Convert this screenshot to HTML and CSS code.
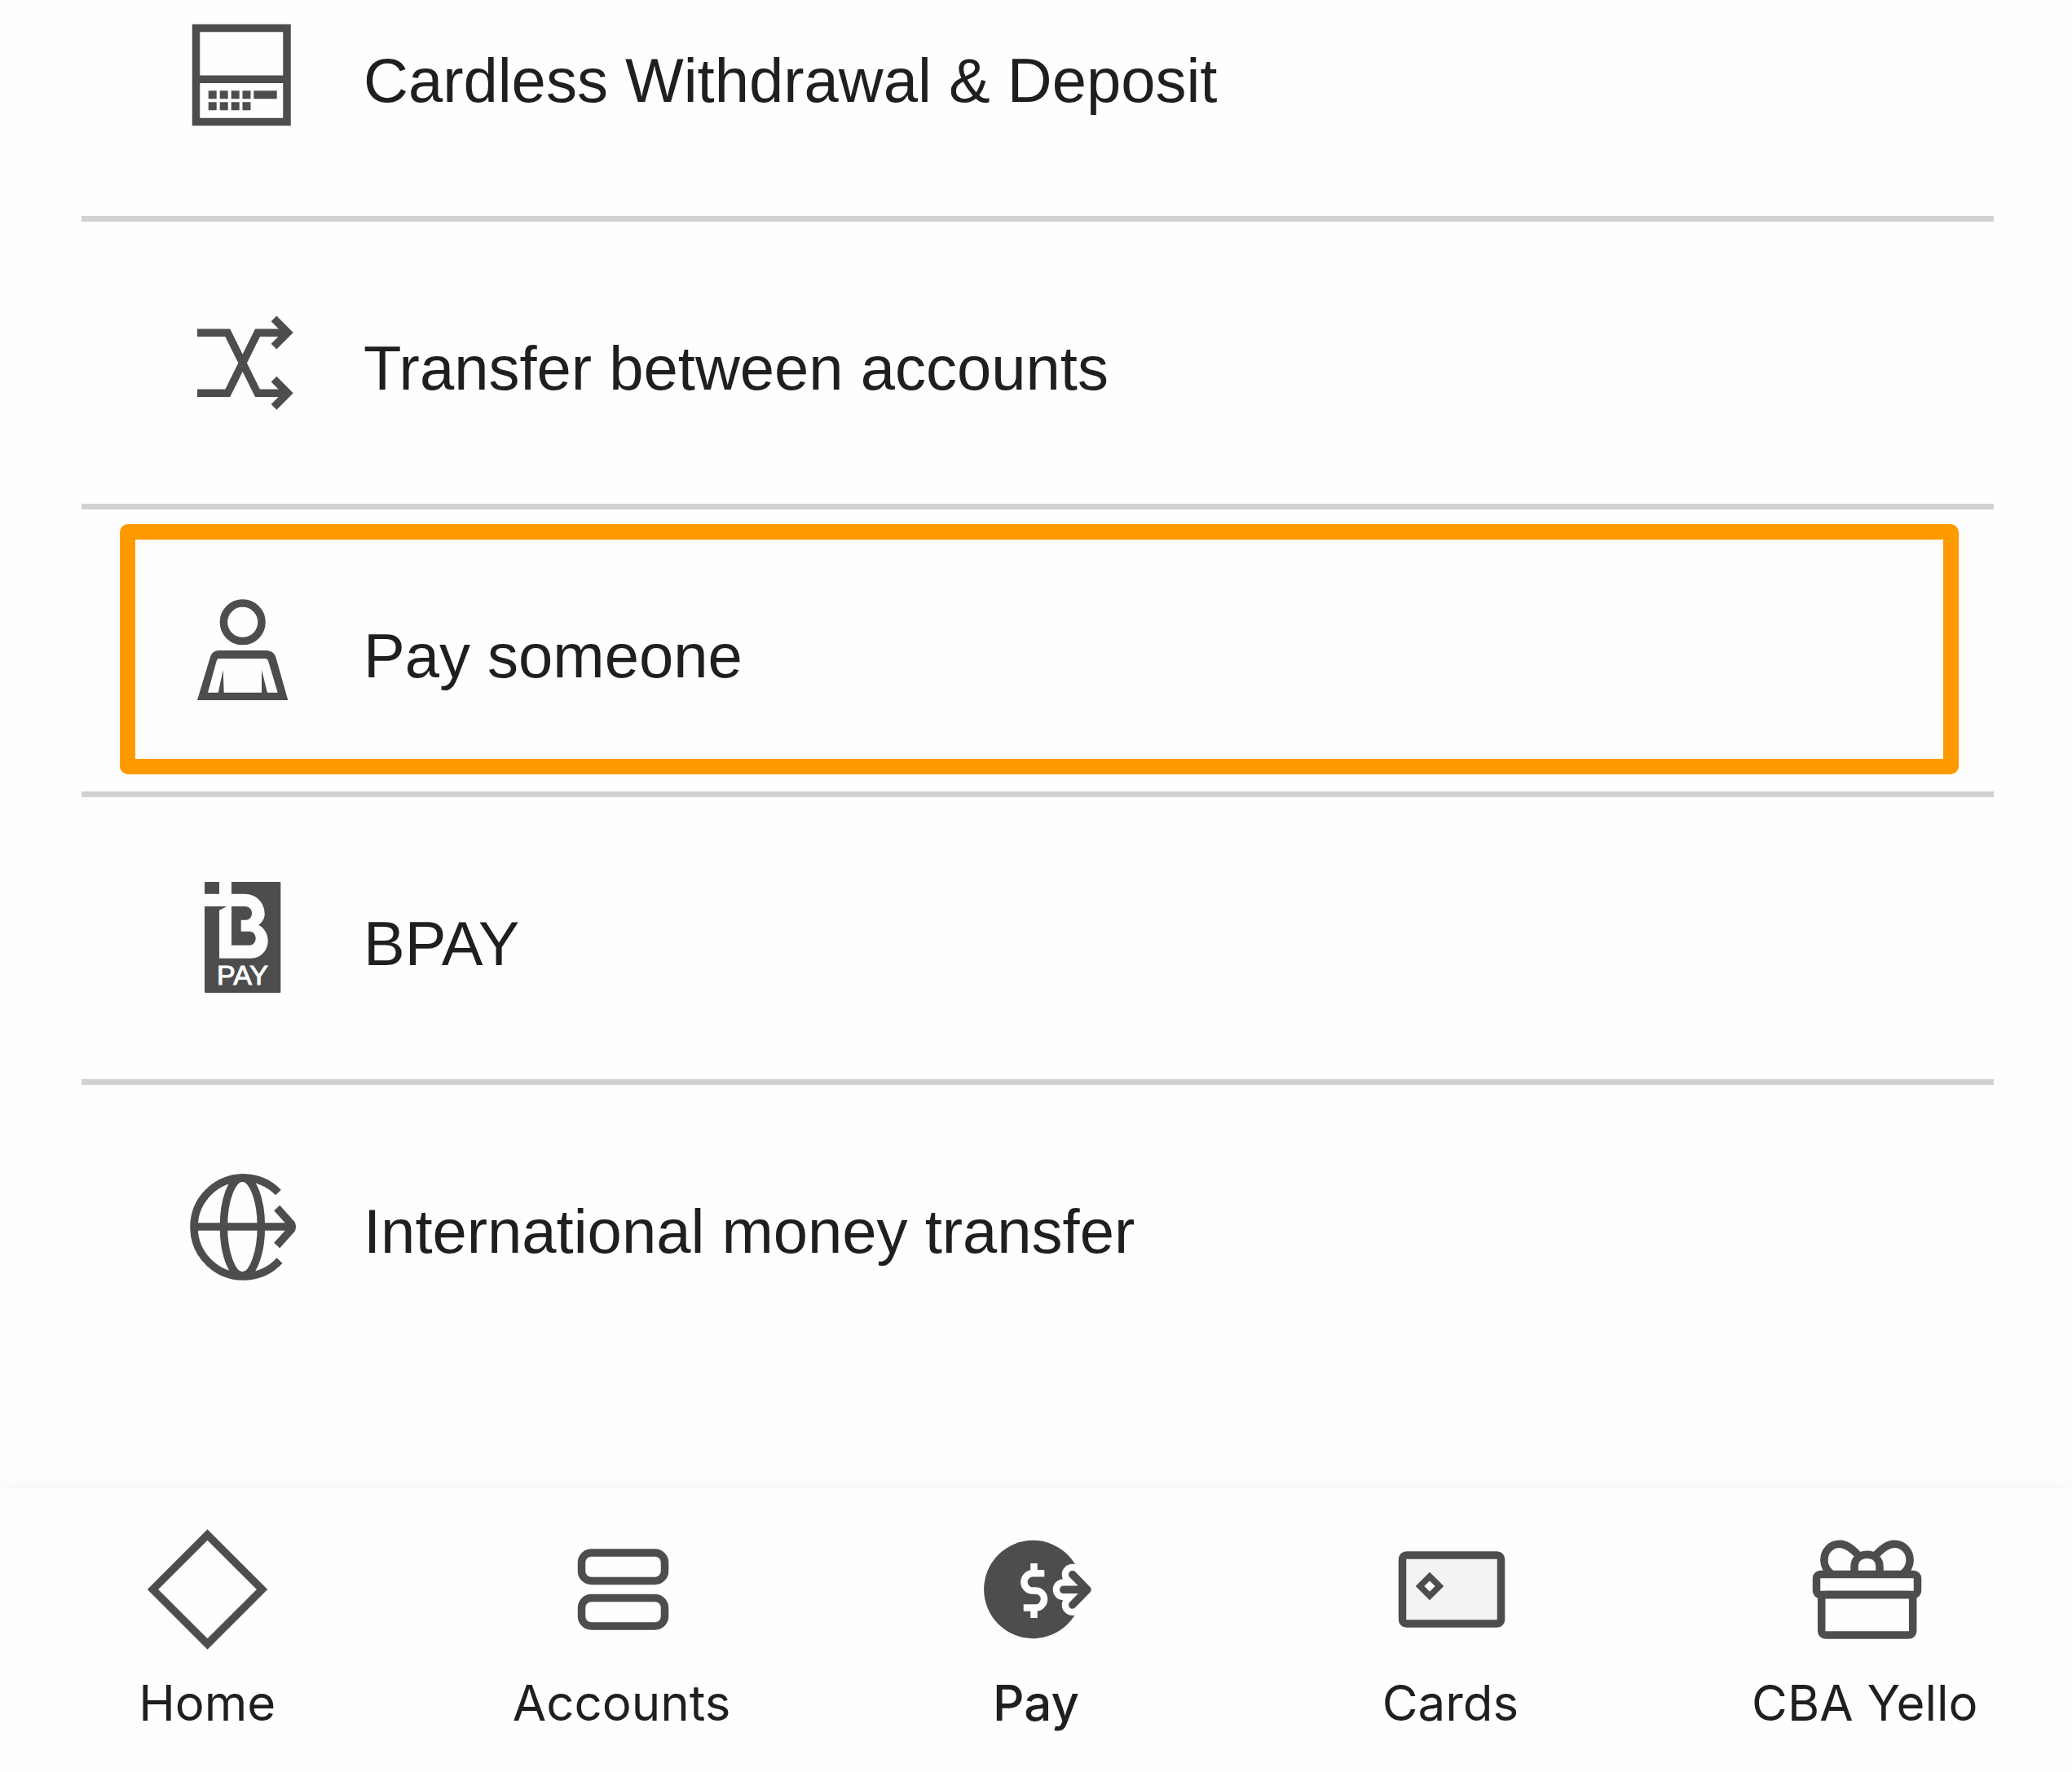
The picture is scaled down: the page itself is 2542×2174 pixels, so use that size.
FILE: index.html
```html
<!DOCTYPE html>
<html lang="en">
<head>
    <meta charset="UTF-8">
    <meta name="viewport" content="width=device-width, initial-scale=1.0">
    <title>Pay</title>
    <link rel="stylesheet" href="styles.css">
</head>
<body>
    <main>
        <ul class="pay-list">
            <li>
                <a href="#" class="pay-option">
                    <svg class="pay-icon" viewBox="0 0 140 140" aria-hidden="true">
                        <path class="line" d="M14.5 12.5H126V127.5H14.5ZM14.5 75.3H126"/>
                        <path class="solid" d="M29.7 89.3h10v10h-10zM43.7 89.3h10v10h-10zM57.7 89.3h10v10h-10zM71.5 89.3h10v10h-10zM85.3 89.3h28.4v10H85.3zM29.7 103.3h10v10h-10zM43.7 103.3h10v10h-10zM57.7 103.3h10v10h-10zM71.5 103.3h10v10h-10z"/>
                    </svg>
                    <span class="pay-label">Cardless Withdrawal &amp; Deposit</span>
                </a>
            </li>
            <li>
                <a href="#" class="pay-option">
                    <svg class="pay-icon" viewBox="0 0 140 140" aria-hidden="true">
                        <path class="line" d="M16 33.3H53.3L90 107.3H126M16 107.3H53.3L90 33.3H126"/>
                        <path class="line" d="M110 15.8L127 33L110 50.2M110 90.2L127 107.3L110 124.4"/>
                    </svg>
                    <span class="pay-label">Transfer between accounts</span>
                </a>
            </li>
            <li>
                <a href="#" class="pay-option selected">
                    <svg class="pay-icon" viewBox="0 0 140 140" aria-hidden="true">
                        <circle class="line" cx="71.7" cy="35.3" r="23.3"/>
                        <path class="solid" fill-rule="evenodd" d="M16 131L32.3 77Q35 70 42.7 70H101.3Q109 70.5 112 77L127.3 131ZM29 121.7H114.7L103 82.7Q102 80 100 80H42.5Q40.5 80 39.7 82.7Z"/>
                        <path class="solid" d="M41.7 122L47.7 93.7L48.7 122ZM95 122V93.7L102 122Z"/>
                    </svg>
                    <span class="pay-label">Pay someone</span>
                </a>
            </li>
            <li>
                <a href="#" class="pay-option">
                    <svg class="pay-icon" viewBox="0 0 140 140" aria-hidden="true">
                        <rect class="solid" x="25" y="1" width="93.3" height="136" rx="1"/>
                        <path class="cutout" d="M43 0H58V15.7H74C89 15.7 98.7 27 98.7 40C98.7 46 96 50 91.3 54C98 57 102.7 65 102.7 73C102.7 85 94 94.7 82.3 94.7H43V35.7L52.3 31H24V15.7H43Z"/>
                        <path class="solid" d="M58 31H74C80 31 83 35 83 39.5S80 47.7 75.7 47.7H69.7V61.7H80C85 61.7 87.7 66 87.7 70.2S85 78.7 80 78.7H58Z"/>
                        <text class="bpay-text" x="71.5" y="127" text-anchor="middle">PAY</text>
                    </svg>
                    <span class="pay-label">BPAY</span>
                </a>
            </li>
            <li>
                <a href="#" class="pay-option">
                    <svg class="pay-icon" viewBox="0 0 140 140" aria-hidden="true">
                        <path class="line" d="M115.5 29A60.5 60.5 0 1 0 117 112.5"/>
                        <ellipse class="line" cx="71.4" cy="71" rx="23" ry="60"/>
                        <path class="line" d="M11 71H130"/>
                        <path class="line rounded" d="M113.7 48L131.5 67.8Q133 71 131.5 74.2L113.7 94"/>
                    </svg>
                    <span class="pay-label">International money transfer</span>
                </a>
            </li>
        </ul>
    </main>

    <nav class="tab-bar">
        <a href="#" class="tab">
            <svg class="tab-icon" viewBox="0 0 150 150" aria-hidden="true">
                <path class="line" d="M75.5 8L142.5 75L75.5 142L8.5 75Z"/>
            </svg>
            <span>Home</span>
        </a>
        <a href="#" class="tab">
            <svg class="tab-icon" viewBox="0 0 150 150" aria-hidden="true">
                <rect class="line" x="25.5" y="30" width="102" height="34.5" rx="12"/>
                <rect class="line" x="25.5" y="85.5" width="102" height="34.5" rx="12"/>
            </svg>
            <span>Accounts</span>
        </a>
        <a href="#" class="tab active" aria-current="page">
            <svg class="tab-icon" viewBox="0 0 150 150" aria-hidden="true">
                <circle class="solid" cx="71.3" cy="75" r="60.2"/>
                <path class="halo" d="M119.7 56.7L138 75.3L119.7 94M108.7 75.3H138"/>
                <path class="line rounded" d="M119.7 56.7L138 75.3L119.7 94M108.7 75.3H138"/>
                <path class="dollar" d="M85.3 55.3H71A10.6 10.6 0 0 0 71 76.5H74.5A10.5 10.5 0 0 1 74.5 97.5H59.7M72.5 43V56M72.5 97V110"/>
            </svg>
            <span>Pay</span>
        </a>
        <a href="#" class="tab">
            <svg class="tab-icon" viewBox="0 0 150 150" aria-hidden="true">
                <rect class="line card" x="16.5" y="33" width="121" height="84" rx="5"/>
                <path class="chip" d="M50 59L62 71L50 83L38 71Z"/>
            </svg>
            <span>Cards</span>
        </a>
        <a href="#" class="tab">
            <svg class="tab-icon" viewBox="0 0 150 150" aria-hidden="true">
                <rect class="line" x="15.5" y="56.5" width="124" height="25" rx="5"/>
                <rect class="line" x="21.7" y="81.5" width="112" height="49.5" rx="5"/>
                <path class="line" d="M35 57C28 52 24.9 46 24.9 39.3C24.9 28 33 19.3 44 19.3C53 19.3 60 26 66 32"/>
                <path class="line" d="M120 57C127 52 130.1 46 130.1 39.3C130.1 28 122 19.3 111 19.3C102 19.3 95 26 89 32"/>
                <path class="line" d="M62 57V48C62 38 68 32.3 77.5 32.3S93 38 93 48V57"/>
            </svg>
            <span>CBA Yello</span>
        </a>
    </nav>
</body>
</html>
```
FILE: styles.css
```css
* {
    box-sizing: border-box;
}
body {
    display: flex;
    flex-direction: column;
    min-height: 100vh;
    margin: 0;
    background-color: #fefefe;
    color: #1f1f1f;
    font-family: "Liberation Sans", Arial, sans-serif;
}
a {
    color: inherit;
    text-decoration: none;
}
main {
    flex: 1;
}

/* Payment options */
.pay-list {
    margin: 0;
    padding: 0 96px 0 100px;
    list-style: none;
}
.pay-list li {
    border-bottom: 7px solid #d1d1d1;
}
.pay-list li:last-child {
    border-bottom: none;
}
.pay-option {
    position: relative;
    display: flex;
    align-items: center;
    gap: 80px;
    padding: 103px 126px;
}
.pay-list li:first-child .pay-option {
    padding-top: 22px;
}
.pay-icon {
    flex: none;
    width: 140px;
    height: 140px;
}
.pay-label {
    padding-top: 14px;
    font-size: 76px;
    line-height: 88px;
}

/* Highlight frame */
.selected::after {
    content: "";
    position: absolute;
    top: 18px;
    right: 43px;
    bottom: 21px;
    left: 47px;
    border: 19px solid #ff9900;
    border-radius: 10px;
}

/* Bottom tabs */
.tab-bar {
    display: flex;
    padding: 49px 0;
    background-color: #fefefe;
    box-shadow: 0 0 24px rgba(0, 0, 0, 0.05);
}
.tab {
    flex: 1;
    display: flex;
    flex-direction: column;
    align-items: center;
    gap: 28px;
    font-family: Inter, sans-serif;
    font-size: 60px;
    font-weight: 400;
    line-height: 72px;
}
.tab-icon {
    width: 150px;
    height: 150px;
}
.active {
    font-weight: 500;
}

/* Icon parts */
.line {
    fill: none;
    stroke: #4d4d4d;
    stroke-width: 9.5;
}
.rounded {
    stroke-linejoin: round;
}
.tab .rounded {
    stroke-linecap: round;
}
.solid {
    fill: #4d4d4d;
}
.cutout {
    fill: #fefefe;
}
.bpay-text {
    fill: #fefefe;
    stroke: #fefefe;
    stroke-width: 1;
    font-size: 34px;
}
.halo {
    fill: none;
    stroke: #fefefe;
    stroke-width: 26;
    stroke-linecap: round;
    stroke-linejoin: round;
}
.dollar {
    fill: none;
    stroke: #fefefe;
    stroke-width: 8.5;
}
.card {
    fill: #f3f3f3;
}
.chip {
    fill: #fefefe;
    stroke: #4d4d4d;
    stroke-width: 7.5;
}
```
